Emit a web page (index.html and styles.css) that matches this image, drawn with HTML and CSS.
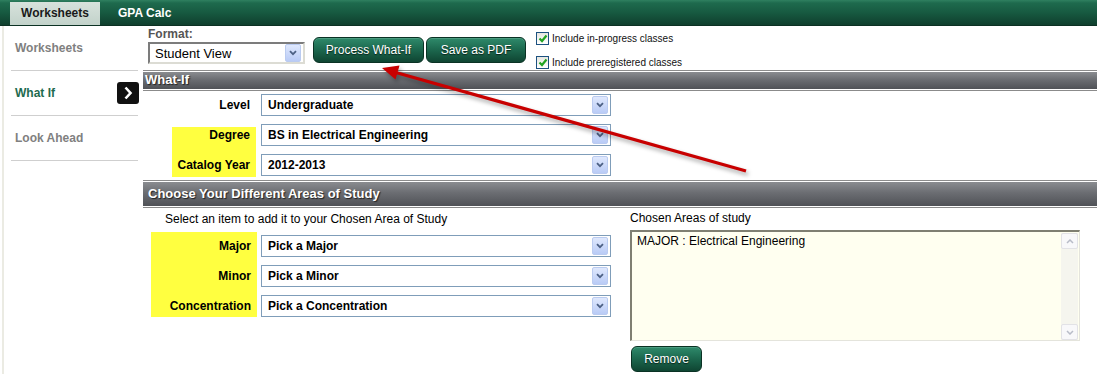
FILE: index.html
```html
<!DOCTYPE html>
<html lang="en">
<head>
    <meta charset="UTF-8">
    <title>What-If</title>
    <link rel="stylesheet" href="styles.css">
</head>
<body>

    <div class="topbar">
        <a class="tab active" href="#">Worksheets</a>
        <a class="tab" href="#">GPA Calc</a>
    </div>

    <div class="layout">
        <ul class="sidebar">
            <li class="side-item"><a href="#">Worksheets</a></li>
            <li class="side-item current">
                <a href="#">What If</a>
                <span class="side-go">
                    <svg width="10" height="14" viewBox="0 0 10 14"><path d="M2.5 1.5l5 5.5-5 5.5" stroke="#fff" stroke-width="2.6" fill="none"/></svg>
                </span>
            </li>
            <li class="side-item"><a href="#">Look Ahead</a></li>
        </ul>

        <div class="main">
            <!-- toolbar -->
            <div class="toolbar">
                <div class="format">
                    <div class="format-label">Format:</div>
                    <div class="select inset">
                        <span class="select-text">Student View</span>
                        <span class="select-arrow"><svg width="8" height="6" viewBox="0 0 8 6"><path d="M1 1.2l3 3 3-3" stroke="#4d6185" stroke-width="1.8" fill="none"/></svg></span>
                    </div>
                </div>
                <div class="actions">
                    <button class="btn">Process What-If</button>
                    <button class="btn">Save as PDF</button>
                </div>
                <div class="checks">
                    <label class="check"><span class="box"><svg width="10" height="9" viewBox="0 0 10 9"><path d="M1.5 4.5l2.5 2.5 4.5-5.5" stroke="#21a321" stroke-width="2.2" fill="none"/></svg></span>Include in-progress classes</label>
                    <label class="check"><span class="box"><svg width="10" height="9" viewBox="0 0 10 9"><path d="M1.5 4.5l2.5 2.5 4.5-5.5" stroke="#21a321" stroke-width="2.2" fill="none"/></svg></span>Include preregistered classes</label>
                </div>
            </div>

            <!-- What-If -->
            <div class="section-head"><div class="section-bar">What-If</div></div>
            <div class="whatif">
                <div class="labels">
                    <div class="lbl lbl-plain">Level</div>
                    <div class="hl hl-whatif">
                        <div class="lbl">Degree</div>
                        <div class="lbl">Catalog Year</div>
                    </div>
                </div>
                <div class="selects">
                    <div class="select"><span class="select-text">Undergraduate</span><span class="select-arrow"><svg width="8" height="6" viewBox="0 0 8 6"><path d="M1 1.2l3 3 3-3" stroke="#4d6185" stroke-width="1.8" fill="none"/></svg></span></div>
                    <div class="select"><span class="select-text">BS in Electrical Engineering</span><span class="select-arrow"><svg width="8" height="6" viewBox="0 0 8 6"><path d="M1 1.2l3 3 3-3" stroke="#4d6185" stroke-width="1.8" fill="none"/></svg></span></div>
                    <div class="select"><span class="select-text">2012-2013</span><span class="select-arrow"><svg width="8" height="6" viewBox="0 0 8 6"><path d="M1 1.2l3 3 3-3" stroke="#4d6185" stroke-width="1.8" fill="none"/></svg></span></div>
                </div>
            </div>

            <!-- Areas of study -->
            <div class="section-head"><div class="section-bar tall">Choose Your Different Areas of Study</div></div>
            <div class="areas">
                <div class="areas-left">
                    <div class="intro">Select an item to add it to your Chosen Area of Study</div>
                    <div class="area-fields">
                        <div class="hl hl-areas">
                            <div class="lbl">Major</div>
                            <div class="lbl">Minor</div>
                            <div class="lbl">Concentration</div>
                        </div>
                        <div class="selects">
                            <div class="select"><span class="select-text">Pick a Major</span><span class="select-arrow"><svg width="8" height="6" viewBox="0 0 8 6"><path d="M1 1.2l3 3 3-3" stroke="#4d6185" stroke-width="1.8" fill="none"/></svg></span></div>
                            <div class="select"><span class="select-text">Pick a Minor</span><span class="select-arrow"><svg width="8" height="6" viewBox="0 0 8 6"><path d="M1 1.2l3 3 3-3" stroke="#4d6185" stroke-width="1.8" fill="none"/></svg></span></div>
                            <div class="select"><span class="select-text">Pick a Concentration</span><span class="select-arrow"><svg width="8" height="6" viewBox="0 0 8 6"><path d="M1 1.2l3 3 3-3" stroke="#4d6185" stroke-width="1.8" fill="none"/></svg></span></div>
                        </div>
                    </div>
                </div>
                <div class="areas-right">
                    <div class="chosen-label">Chosen Areas of study</div>
                    <div class="chosen">
                        <div class="chosen-text">MAJOR : Electrical Engineering</div>
                        <div class="scroll">
                            <span class="scroll-btn"><svg width="8" height="5" viewBox="0 0 8 5"><path d="M1 4l3-3 3 3" stroke="#b8bcc8" stroke-width="1.5" fill="none"/></svg></span>
                            <span class="scroll-btn"><svg width="8" height="5" viewBox="0 0 8 5"><path d="M1 1l3 3 3-3" stroke="#b8bcc8" stroke-width="1.5" fill="none"/></svg></span>
                        </div>
                    </div>
                    <button class="btn btn-small">Remove</button>
                </div>
            </div>
        </div>
    </div>

    <!-- annotation arrow -->
    <svg class="callout" width="1097" height="374" viewBox="0 0 1097 374">
        <g class="callout-arrow">
            <line x1="746" y1="171" x2="394" y2="72" stroke="#c80000" stroke-width="3.2"/>
            <polygon points="382,68 399.5,65.5 395.5,79.5" fill="#c80000"/>
        </g>
    </svg>

</body>
</html>
```

FILE: styles.css
```css
/* Base */
* {
    margin: 0;
    padding: 0;
    box-sizing: border-box;
}

body {
    position: relative;
    width: 1097px;
    height: 374px;
    overflow: hidden;
    background: #fff;
    font-family: "Liberation Sans", Arial, sans-serif;
    font-size: 12px;
    color: #000;
}

/* Top tabs */
.topbar {
    height: 26px;
    display: flex;
    align-items: flex-end;
    padding-left: 10px;
    background: linear-gradient(#2f8060 0, #1e6a4d 3px, #175a41 50%, #0f3f2d 100%);
    border-bottom: 1px solid #0c3123;
}

.tab {
    display: block;
    height: 23px;
    line-height: 22px;
    padding: 0 10px;
    margin-right: 8px;
    font-weight: bold;
    color: #fff;
    text-decoration: none;
}

.tab.active {
    width: 90px;
    text-align: center;
    color: #1a1a1a;
    background: linear-gradient(#d7e2dc, #c2d2ca);
}

/* Layout */
.layout {
    display: flex;
}

/* Sidebar */
.sidebar {
    width: 141px;
    height: 348px;
    list-style: none;
    padding: 0 5px 0 7px;
    border-left: 2px solid #ebebe3;
    margin-left: 2px;
}

.side-item {
    height: 45px;
    display: flex;
    align-items: center;
    justify-content: space-between;
    padding-left: 4px;
    border-bottom: 1px solid #cfcfcf;
}

.side-item a {
    font-weight: bold;
    color: #808080;
    text-decoration: none;
}

.side-item.current a {
    color: #1e6b4f;
}

.side-go {
    width: 22px;
    height: 22px;
    margin-right: -1px;
    display: flex;
    align-items: center;
    justify-content: center;
    background: #111;
    border-radius: 3px;
}

/* Main */
.main {
    flex: 1;
}

.toolbar {
    height: 44px;
    display: flex;
    align-items: flex-start;
    padding: 1px 0 0 5px;
}

.format-label {
    height: 15px;
    line-height: 14px;
    font-weight: bold;
    color: #555;
}

/* fake select boxes */
.select {
    width: 350px;
    height: 22px;
    display: flex;
    align-items: center;
    justify-content: space-between;
    padding: 0 2px 0 6px;
    background: #fff;
    border: 1px solid #7f9db9;
    font-weight: bold;
}

.select.inset {
    width: 157px;
    font-weight: normal;
    font-size: 13px;
    padding-left: 5px;
    border: 2px solid #7c7c7c;
    border-right-color: #dcdcd4;
    border-bottom-color: #dcdcd4;
}

.select-arrow {
    width: 16px;
    height: 18px;
    display: flex;
    align-items: center;
    justify-content: center;
    background: linear-gradient(#dfe8fd, #b9cbf6);
    border: 1px solid #bacbf0;
    border-radius: 2px;
}

.actions {
    display: flex;
    gap: 2px;
    margin: 10px 0 0 8px;
}

.btn {
    height: 26px;
    padding: 0;
    white-space: nowrap;
    font-family: "Liberation Sans", Arial, sans-serif;
    font-size: 12px;
    color: #fff;
    text-shadow: 0 1px 1px #062218;
    background: linear-gradient(#2f8a6b 0, #1d6a50 45%, #0f4532 100%);
    border: 1px solid #0a3224;
    border-radius: 6px;
    box-shadow: inset 0 1px 0 #4a9c80;
}

.actions .btn:first-child {
    width: 111px;
}

.actions .btn:last-child {
    width: 100px;
}

.checks {
    margin: 5px 0 0 10px;
    display: flex;
    flex-direction: column;
    gap: 11px;
}

.check {
    display: flex;
    align-items: center;
    gap: 3px;
    height: 13px;
    font-size: 10px;
    color: #111;
}

.box {
    width: 13px;
    height: 13px;
    display: flex;
    align-items: center;
    justify-content: center;
    border: 1px solid #1c5180;
    background: linear-gradient(#e6e6e0, #fff);
}

/* Section headers */
.section-head {
    border-top: 1px solid #8b8b8b;
    border-bottom: 1px solid #8b8b8b;
    padding: 1px 0;
    background: #fff;
}

.section-bar {
    height: 17px;
    line-height: 16px;
    padding-left: 2px;
    font-size: 13px;
    font-weight: bold;
    color: #fff;
    text-shadow: 1px 1px 1px #222;
    background: linear-gradient(#8a8c90 0, #6b6d72 45%, #505257 100%);
}

.section-bar.tall {
    height: 24px;
    line-height: 24px;
    padding-left: 5px;
}

/* What-If form */
.whatif {
    display: flex;
    height: 89px;
    padding-left: 29px;
}

.labels {
    width: 84px;
}

.lbl {
    height: 30px;
    padding-right: 6px;
    text-align: right;
    font-weight: bold;
}

.lbl-plain {
    padding-top: 3px;
    line-height: 22px;
}

.hl {
    background: #ffff40;
}

.hl-whatif {
    height: 50px;
    margin-top: 6px;
}

.hl-whatif .lbl {
    line-height: 16px;
}

.selects {
    display: flex;
    flex-direction: column;
    gap: 8px;
    padding-top: 3px;
    margin-left: 5px;
}

/* Areas */
.areas {
    display: flex;
}

.areas-left {
    width: 487px;
}

.intro {
    padding: 3px 0 0 22px;
    line-height: 16px;
}

.area-fields {
    display: flex;
    margin: 5px 0 0 8px;
}

.hl-areas {
    width: 106px;
    height: 85px;
}

.hl-areas .lbl {
    line-height: 28px;
}

.area-fields .selects {
    margin-left: 4px;
}

.chosen-label {
    padding-top: 2px;
    line-height: 16px;
}

.chosen {
    width: 450px;
    height: 111px;
    margin-top: 4px;
    display: flex;
    background: #fffff0;
    border: 2px solid #7f7f72;
    border-right: 1px solid #e4e4dc;
    border-bottom: 1px solid #e4e4dc;
}

.chosen-text {
    flex: 1;
    padding: 2px 5px;
    line-height: 14px;
}

.scroll {
    width: 17px;
    margin: 1px 1px 0 0;
    display: flex;
    flex-direction: column;
    justify-content: space-between;
    background: #f5f5ee;
}

.scroll-btn {
    height: 16px;
    display: flex;
    align-items: center;
    justify-content: center;
    border: 1px solid #e2e2e6;
    border-radius: 2px;
    background: #f8f8fa;
}

.btn-small {
    display: block;
    width: 71px;
    height: 26px;
    margin: 5px 0 0 1px;
}

/* Annotation overlay */
.callout {
    position: absolute;
    left: 0;
    top: 0;
    pointer-events: none;
}

.callout-arrow {
    filter: drop-shadow(2px 3px 2px rgba(0, 0, 0, 0.35));
}
```
